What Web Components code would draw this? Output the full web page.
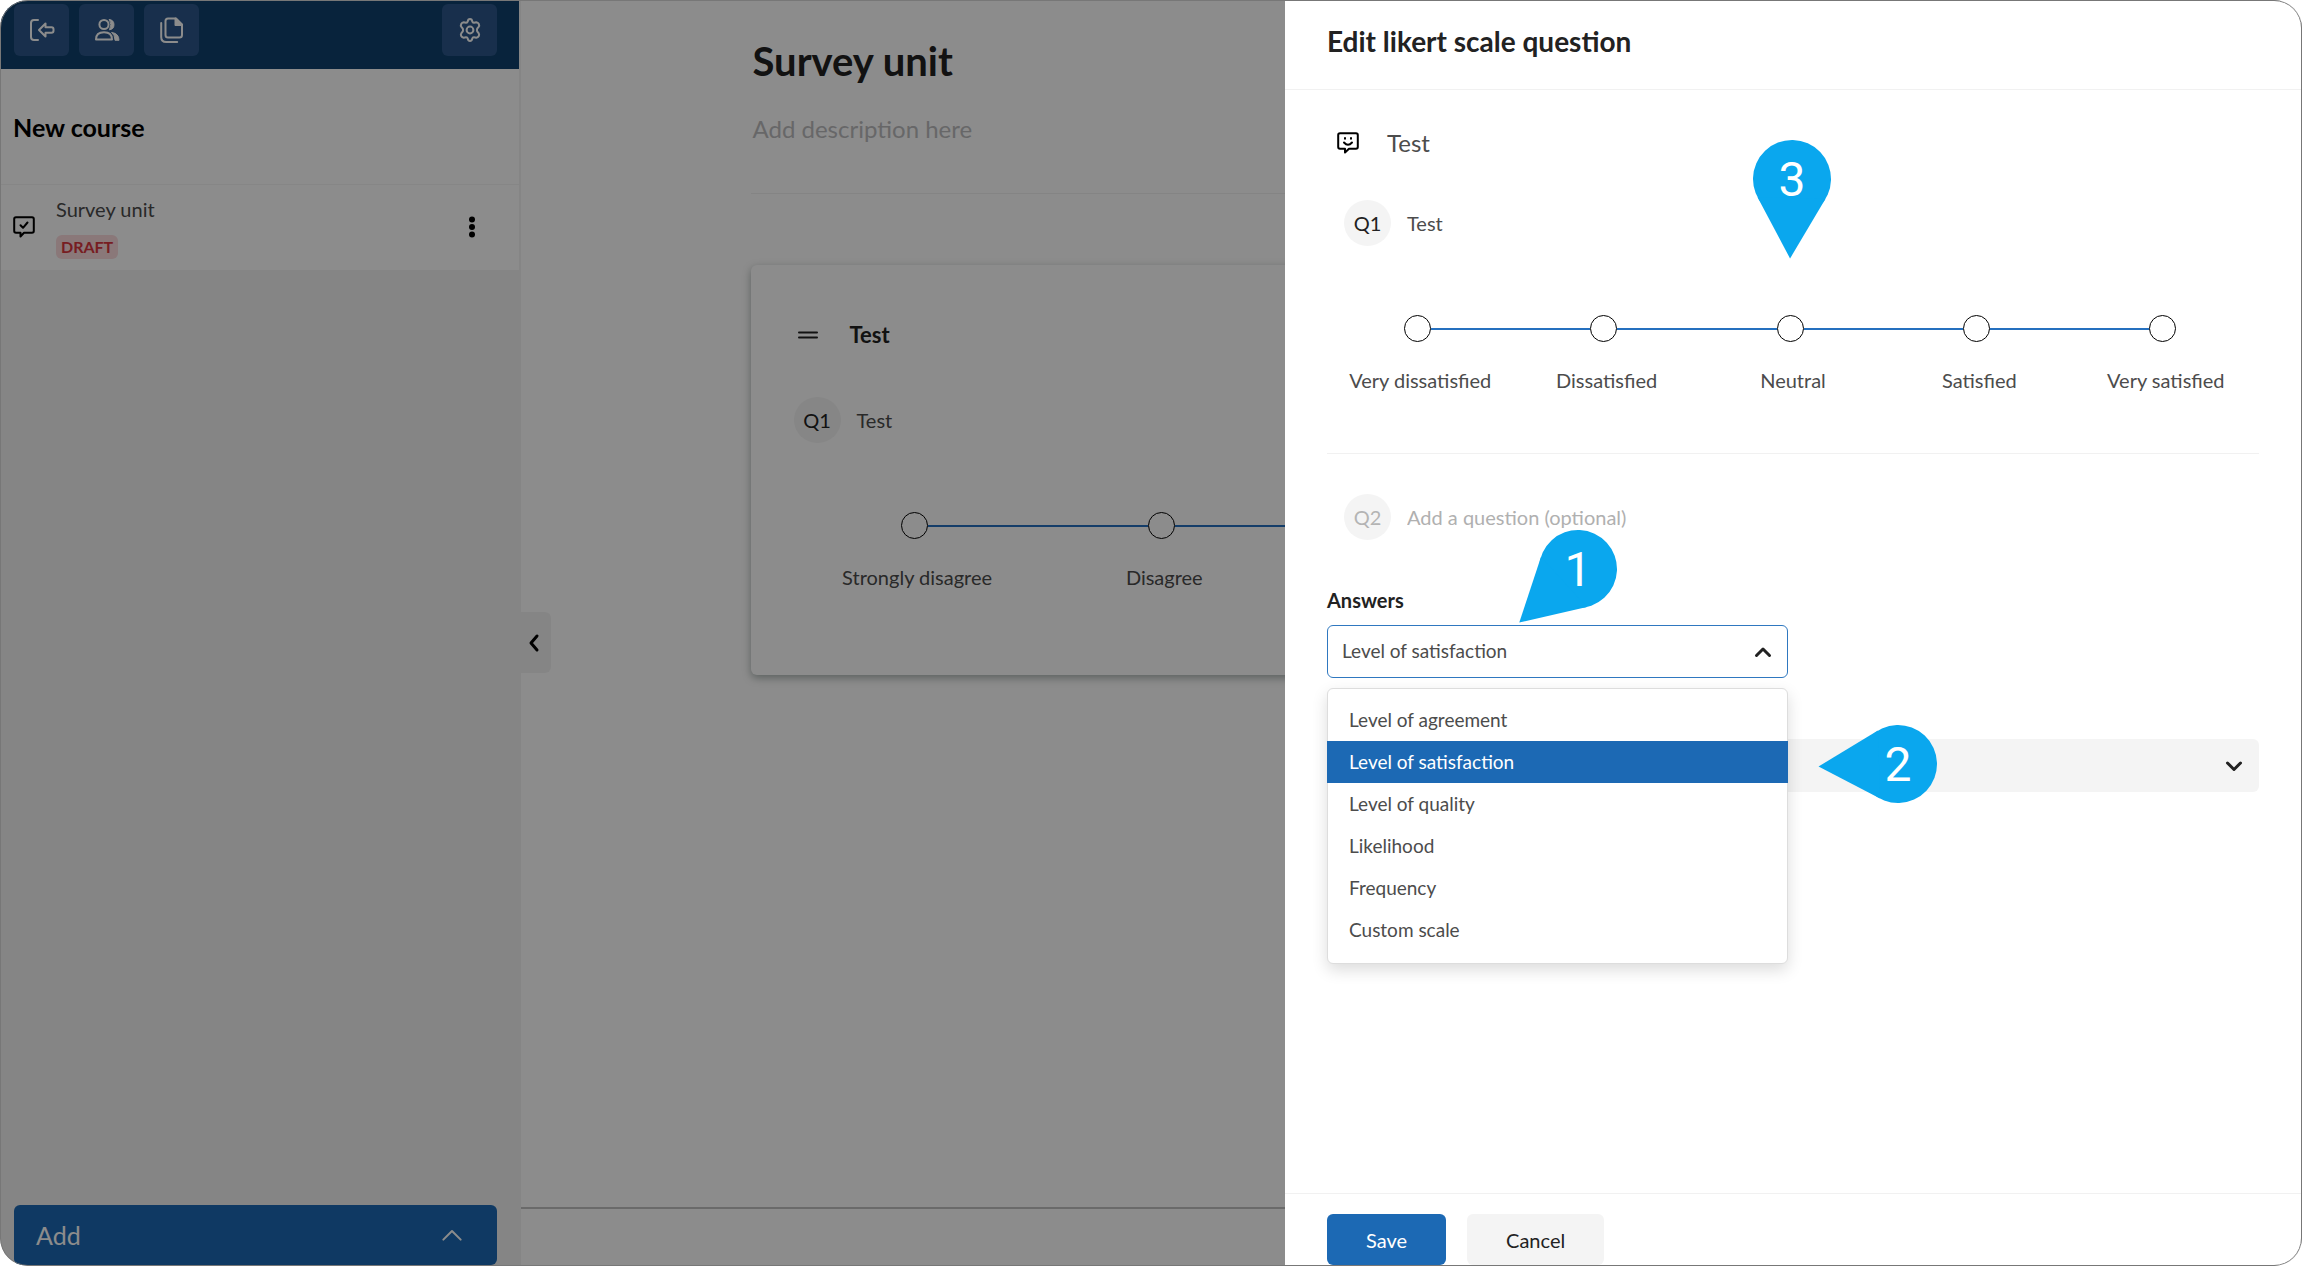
<!DOCTYPE html>
<html lang="en">
<head>
<meta charset="utf-8">
<meta name="viewport" content="width=device-width, initial-scale=1">
<title>Survey unit</title>
<style>
  html, body { margin: 0; height: 100%; background: #fff; }
  body {
    --blue: #1c69b4; --navy: #10406d; --ink: #222; --text: #4c4c4c; --soft: #f4f4f4;
    font-family: Lato, "Open Sans", sans-serif; font-size: 20px; line-height: 26px; color: var(--text);
  }
</style>
</head>
<body>
<app-shell>
  <course-sidebar slot="side" heading="New course"></course-sidebar>
  <survey-page slot="main"></survey-page>
  <edit-drawer slot="drawer" heading="Edit likert scale question"></edit-drawer>
  <step-pin slot="pins" style="left:1578px;top:569px" turn="47.6">1</step-pin>
  <step-pin slot="pins" style="left:1898px;top:764px" turn="88.2">2</step-pin>
  <step-pin slot="pins" style="left:1792px;top:179px" turn="1.4">3</step-pin>
</app-shell>
<script>
const BASE = `:host,*{box-sizing:border-box} button,input,select{font:inherit;color:inherit;margin:0;border:0;background:none;padding:0} h1,h2,h3,p,ul{margin:0;padding:0;font-weight:inherit;font-size:inherit} svg{display:block;flex:none}`;
const define = (name, css, html) => customElements.define(name, class extends HTMLElement {
  constructor() { super(); this.attachShadow({ mode: 'open' }); }
  connectedCallback() {
    this.shadowRoot.innerHTML = `<style>${BASE}${css}</style>` + (typeof html === 'function' ? html(this) : html);
  }
});

const ICONS = {
  exit: ['0 0 26 26', `<path d="M9 3H5Q2 3 2 6v14q0 3 3 3h4"/><path d="M10 13l6.500-6.500v3.700h6q2 0 2 2v1.600q0 2-2 2h-6v3.700z"/>`],
  users: ['0 0 26 26', `<circle cx="10" cy="7.500" r="4.600"/><path d="M2 22.500q0-7.200 8-7.200t8 7.200z"/><path d="M15.500 2.500a5.200 5.200 0 0 1 0 10.300q2.800-5 0-10.300z M18 15.500q7 1 7 7.800h-4q0-5-3-7.800z" fill="currentColor" stroke-width="1"/>`],
  copy: ['0 0 26 26', `<path d="M9 1.500h8l6 6V18q0 2.500-2.500 2.500H9Q6.500 20.500 6.500 18V4Q6.500 1.500 9 1.500z"/><path d="M16.500 1.500v6.500h6.500z" fill="currentColor"/><path d="M2.200 6v14q0 5 5 5h11"/>`],
  gear: ['0 0 26 26', `<circle cx="13" cy="13" r="3.400"/><path d="M10.700 4.600Q11 2 13 2t2.300 2.600q.3 1.200 1.700 1.100l2.300-.4q1.700.2 2.500 1.700t-.2 2.900l-1.400 1.800q-.5 1.300 0 2.600l1.400 1.800q1 1.400.2 2.900t-2.500 1.700l-2.300-.4q-1.400-.1-1.700 1.100Q15 24 13 24t-2.300-2.600q-.3-1.200-1.700-1.100l-2.300.4q-1.700-.2-2.500-1.700t.2-2.900l1.400-1.800q.5-1.300 0-2.600L4.400 9.900q-1-1.400-.2-2.900t2.500-1.700L9 5.700q1.400.1 1.700-1.100z"/>`],
  survey: ['0 0 22 22', `<path d="M3 1.200h16q1.800 0 1.800 1.800v12q0 1.800-1.800 1.800h-8L7.500 20.500V16.800H3q-1.800 0-1.800-1.800V3q0-1.800 1.800-1.800z"/><path d="M7.500 9.300l2.500 2.500 4.500-5.300"/>`],
  smile: ['0 0 22 22', `<path d="M3 1.200h16q1.800 0 1.800 1.800v12q0 1.800-1.800 1.800h-7L8 20.500V16.800H3q-1.800 0-1.800-1.800V3q0-1.800 1.800-1.800z"/><path d="M7 10.500q4 4.400 8 0"/><path d="M8 6v.8M14 6v.8"/>`],
  dots: ['0 0 24 24', `<g fill="currentColor" stroke="none"><circle cx="12" cy="4.500" r="3"/><circle cx="12" cy="12" r="3"/><circle cx="12" cy="19.500" r="3"/></g>`],
  drag: ['0 0 20 20', `<path d="M1 7.500h18M1 12.500h18"/>`],
  up: ['0 0 18 18', `<path d="M2.500 12.500L9 6l6.500 6.500"/>`],
  down: ['0 0 18 18', `<path d="M2.500 6L9 12.500 15.500 6"/>`],
  left: ['0 0 20 20', `<path d="M13 3l-6 7 6 7"/>`]
};
const icon = (name, size, weight = 2) => `<svg width="${size}" height="${size}" viewBox="${ICONS[name][0]}" fill="none" stroke="currentColor" stroke-width="${weight}" stroke-linecap="round" stroke-linejoin="round" aria-hidden="true">${ICONS[name][1]}</svg>`;

define('app-shell', `
  :host{display:flex;position:relative;height:100vh;overflow:hidden;border-radius:28px;background:#fff}
  .main{flex:1;min-width:0;display:flex}
  .side{display:flex;flex:none}
  .shade{position:absolute;inset:0;background:rgba(0,0,0,.45)}
  .drawer{position:absolute;top:1px;right:1px;bottom:1px;width:min(1016px,100%);display:flex}
  .edge{position:absolute;inset:0;border:1px solid #777;border-radius:28px;pointer-events:none}
  ::slotted(*){flex:1}
`, `<div class="side"><slot name="side"></slot></div><div class="main"><slot name="main"></slot></div>
    <div class="shade"></div><div class="drawer"><slot name="drawer"></slot></div><div class="edge"></div><slot name="pins"></slot>`);

define('tool-button', `
  :host{display:block}
  button{width:55px;height:52px;border-radius:6px;background:#2c578a;color:#fff;display:grid;place-items:center}
`, el => `<button type="button" aria-label="${el.getAttribute('label')}">${icon(el.getAttribute('icon'), 26)}</button>`);

define('course-sidebar', `
  :host{display:flex;flex-direction:column;width:521px;background:#f3f3f3;padding:1px 2px 0 1px}
  header{display:flex;gap:10px;padding:3px 22px 13px 13px;background:var(--navy)}
  header :last-child{margin-left:auto}
  h2{display:flex;align-items:center;height:116px;padding:0 12px;background:#fff;border-bottom:1px solid #f4f4f4;font-size:25px;font-weight:700;color:#000}
  .unit{display:flex;align-items:center;gap:21px;padding:10px 35px 11px 12px;background:#fff;color:#000}
  .info{flex:1;display:flex;flex-direction:column;align-items:flex-start;gap:12px;color:var(--text)}
  .name{line-height:28px}
  .tag{padding:0 5px;border-radius:6px;background:#fbdadd;color:#d9363e;font-size:16px;line-height:24px;font-weight:700}
  .add{margin:auto 22px 1px 13px;height:60px;padding:0 33px 0 22px;display:flex;align-items:center;justify-content:space-between;border-radius:6px;background:var(--blue);color:#fff;font-size:25px}
`, el => `<header><tool-button icon="exit" label="Exit"></tool-button><tool-button icon="users" label="Users"></tool-button><tool-button icon="copy" label="Files"></tool-button><tool-button icon="gear" label="Settings"></tool-button></header>
  <h2>${el.getAttribute('heading')}</h2>
  <div class="unit">${icon('survey', 22)}<div class="info"><span class="name">Survey unit</span><span class="tag">DRAFT</span></div><button type="button" aria-label="Unit menu">${icon('dots', 24)}</button></div>
  <button class="add" type="button"><span>Add</span>${icon('up', 24, 1.500)}</button>`);

define('survey-page', `
  :host{display:flex;flex-direction:column;position:relative;background:#fff}
  .content{width:min(1322px,100% - 48px);margin:0 auto;flex:1;padding-top:37px}
  .intro{padding:0 2px 48px;border-bottom:1px solid #f1f1f1}
  h1{font-size:40px;line-height:48px;font-weight:700;color:var(--ink)}
  .intro p{margin-top:28px;font-size:24px;line-height:32px;color:#bcbcbe}
  .card{margin-top:71px;padding:56px 43px 85px;border-radius:6px;background:#fff;box-shadow:0 3px 8px rgba(0,30,20,.35)}
  .title{display:flex;align-items:center;gap:32px;padding-left:4px;margin-bottom:48px;font-size:22px;line-height:28px;font-weight:700;color:var(--ink)}
  .bar{height:59px;border-top:2px solid #c1c1c1}
  .fold{position:absolute;left:0;top:calc(50% - 21px);width:30px;height:61px;padding:0 3px;border-radius:0 6px 6px 0;background:#f3f3f3;color:#000}
`, `<div class="content"><div class="intro"><h1>Survey unit</h1><p>Add description here</p></div>
    <section class="card"><h3 class="title">${icon('drag', 20, 2)}<span>Test</span></h3>
      <question-line number="Q1">Test</question-line>
      <likert-scale name="agreement" points="Strongly disagree|Disagree|Neutral|Agree|Strongly agree"></likert-scale></section></div>
  <div class="bar"></div><button class="fold" type="button" aria-label="Collapse">${icon('left', 20, 3)}</button>`);

define('question-line', `
  :host{display:flex;align-items:center;gap:16px}
  .badge{width:47px;height:46px;border-radius:50%;display:grid;place-items:center;background:var(--soft);color:var(--ink);flex:none}
  :host([optional]) .badge{color:#b4b4b4}
  input{display:block;width:100%;outline:0;height:26px}
  input::placeholder{color:#b0b0b0;opacity:1}
  .text{flex:1}
`, el => `<span class="badge" id="n">${el.getAttribute('number')}</span><span class="text">${el.hasAttribute('optional') ? `<input type="text" aria-labelledby="n" placeholder="${el.getAttribute('placeholder')}">` : '<slot></slot>'}</span>`);

define('likert-scale', `
  :host{display:grid;grid-template-columns:repeat(5,1fr);margin-top:69px}
  .point{display:flex;flex-direction:column;gap:25px;text-align:center}
  .track{display:flex;align-items:center}
  .track::before,.track::after{content:"";height:2px;background:#2570bf;flex:1 1 0}
  .track::after{flex-basis:6px}
  .point:first-of-type .track::before,.point:last-of-type .track::after{background:none}
  input{appearance:none;flex:none;width:27px;height:27px;border:1px solid #000;border-radius:50%;background:#fff}
`, el => el.getAttribute('points').split('|').map((p, i) => `<div class="point"><span class="track"><input type="radio" name="${el.getAttribute('name')}" id="p${i}"></span><label for="p${i}">${p}</label></div>`).join(''));

define('scale-select', `
  :host{display:block;position:relative;width:461px;max-width:100%}
  .field{display:grid;align-items:center}
  .field>*{grid-area:1/1}
  .field svg{justify-self:end;margin-right:16px;pointer-events:none;color:var(--ink)}
  label{display:block;margin-bottom:12px;font-weight:700;color:var(--ink)}
  select{appearance:none;width:100%;height:53px;padding:0 14px 1px;border:1px solid #2f78c0;border-radius:6px;background:#fff;outline:0;font-size:19px}
  ul{position:absolute;left:0;right:0;top:calc(100% + 10px);padding:10px 0 12px;list-style:none;background:#fff;border:1px solid #ddd;border-radius:6px;box-shadow:0 6px 16px rgba(0,0,0,.14);font-size:19px}
  li{padding:8px 21px}
  li[aria-selected=true]{background:var(--blue);color:#fff;margin:0 -1px;padding:8px 22px}
`, el => {
  const value = el.getAttribute('value'), items = el.getAttribute('options').split('|');
  return `<label for="s">${el.getAttribute('label')}</label><div class="field"><select id="s">${[value].concat(items.filter(o => o !== value)).map(o => `<option>${o}</option>`).join('')}</select>${icon('up', 18, 3)}</div>
    <ul role="listbox" aria-label="${el.getAttribute('label')}">${items.map(o => `<li role="option" aria-selected="${o === value}">${o}</li>`).join('')}</ul>`;
});

define('edit-drawer', `
  :host{display:flex;flex-direction:column;background:#fff}
  h2{padding:24px 42px 31px;border-bottom:1px solid #f1f1f1;font-size:28px;line-height:33px;font-weight:700;color:var(--ink)}
  .body{flex:1;padding:37px 42px 0}
  .name{display:flex;align-items:center;gap:28px;padding-left:10px;margin-bottom:41px;font-size:24px;line-height:32px}
  .name svg{color:#000}
  question-line{padding-left:17px}
  hr{margin:60px 0 40px;border:0;border-top:1px solid #f1f1f1}
  scale-select{margin-top:47px}
  .more{display:flex;align-items:center;justify-content:flex-end;width:100%;height:53px;margin-top:61px;padding-right:16px;border-radius:6px;background:var(--soft);color:var(--ink)}
  footer{display:flex;gap:21px;padding:20px 42px 0;border-top:1px solid #f1f1f1}
  footer button{height:51px;padding:0 39px;border-radius:6px;background:var(--soft);color:var(--ink)}
  footer .save{background:var(--blue);color:#fff}
`, el => `<h2>${el.getAttribute('heading')}</h2>
  <div class="body"><div class="name">${icon('smile', 22)}<span>Test</span></div>
    <question-line number="Q1">Test</question-line>
    <likert-scale name="satisfaction" points="Very dissatisfied|Dissatisfied|Neutral|Satisfied|Very satisfied"></likert-scale>
    <hr>
    <question-line number="Q2" optional placeholder="Add a question (optional)"></question-line>
    <scale-select label="Answers" value="Level of satisfaction" options="Level of agreement|Level of satisfaction|Level of quality|Likelihood|Frequency|Custom scale"></scale-select>
    <button class="more" type="button" aria-label="More settings">${icon('down', 18, 3)}</button></div>
  <footer><button class="save" type="button">Save</button><button type="button">Cancel</button></footer>`);

define('step-pin', `
  :host{position:absolute;width:0;height:0;display:grid;place-items:center;place-content:center;font:400 48px/56px Roboto,sans-serif;color:#fff;pointer-events:none}
  svg,span{grid-area:1/1}
  span{padding-top:2px}
`, el => `<svg width="160" height="160" viewBox="-80 -80 160 160" aria-hidden="true"><g fill="#0aa7ee" transform="rotate(${el.getAttribute('turn')})"><circle r="39"/><path d="M-34 19L0 79.500L34 19z"/></g></svg><span><slot></slot></span>`);
</script>
</body>
</html>
